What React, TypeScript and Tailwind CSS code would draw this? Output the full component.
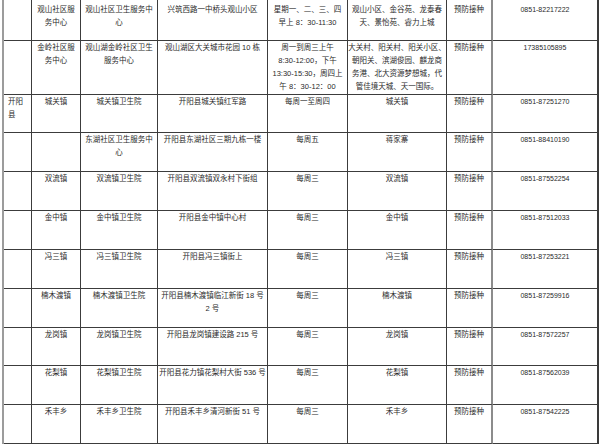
import React from "react";

const br = <br />;

const rows: React.ReactNode[][] = [
  [
    "",
    <>观山社区服{br}务中心</>,
    <>观山社区卫生服务中{br}心</>,
    "兴筑西路一中桥头观山小区",
    <>星期一、二、三、四{br}早上 8：30-11:30</>,
    <>观山小区、金谷苑、龙泰春{br}天、景怡苑、睿力上城</>,
    "预防接种",
    "0851-82217222",
  ],
  [
    "",
    <>金岭社区服{br}务中心</>,
    <>观山湖金岭社区卫生{br}服务中心</>,
    "观山湖区大关城市花园 10 栋",
    <>周一到周三上午{br}8:30-12:00，下午{br}13:30-15:30，周四上{br}午 8：30-12：00</>,
    <>大关村、阳关村、阳关小区、{br}朝阳关、滨湖俊园、麒龙商{br}务港、北大资源梦想城，代{br}管佳境天城、天一国际。</>,
    "预防接种",
    "17385105895",
  ],
  [<>开阳{br}县</>, "城关镇", "城关镇卫生院", "开阳县城关镇红军路", "每周一至周四", "城关镇", "预防接种", "0851-87251270"],
  ["", "", <>东湖社区卫生服务中{br}心</>, "开阳县东湖社区三期九栋一楼", "每周五", "蒋家寨", "预防接种", "0851-88410190"],
  ["", "双流镇", "双流镇卫生院", "开阳县双流镇双永村下街组", "每周三", "双流镇", "预防接种", "0851-87552254"],
  ["", "金中镇", "金中镇卫生院", "开阳县金中镇中心村", "每周三", "金中镇", "预防接种", "0851-87512033"],
  ["", "冯三镇", "冯三镇卫生院", "开阳县冯三镇街上", "每周三", "冯三镇", "预防接种", "0851-87253221"],
  ["", "楠木渡镇", "楠木渡镇卫生院", <>开阳县楠木渡镇临江新街 18 号{br}2 号</>, "每周三", "楠木渡镇", "预防接种", "0851-87259916"],
  ["", "龙岗镇", "龙岗镇卫生院", "开阳县龙岗镇建设路 215 号", "每周三", "龙岗镇", "预防接种", "0851-87572257"],
  ["", "花梨镇", "花梨镇卫生院", "开阳县花力镇花梨村大街 536 号", "每周三", "花梨镇", "预防接种", "0851-87562039"],
  ["", "禾丰乡", "禾丰乡卫生院", "开阳县禾丰乡清河新街 51 号", "每周三", "禾丰乡", "预防接种", "0851-87542225"],
];

const colClass = [
  "text-left pl-[4px] border-r border-[#3c3c3c]",
  "text-center border-r border-[#3c3c3c]",
  "text-center border-r border-[#3c3c3c]",
  "text-center border-r border-[#3c3c3c]",
  "text-center border-r border-[#3c3c3c]",
  "text-center border-r border-[#3c3c3c]",
  "text-center border-r-2 border-r-[#8c8c8c]",
  "text-center border-r-2 border-r-[#3a3a3a]",
];

export default function App() {
  return (
    <div
      className="w-[600px] h-[446px] bg-white overflow-hidden text-[#2a2a2a]"
      style={{ fontFamily: '"Liberation Sans", "Noto Sans CJK SC", sans-serif' }}
    >
      <div className="ml-[2px] w-[597px] border-l-2 border-[#9c9c9c] grid grid-cols-[28px_49px_77px_110px_80px_99px_46px_106px] grid-rows-[41px_54px_38px_39px_39px_39px_39px_39px_38px_39px_39px]">
        {rows.map((r, ri) =>
          r.map((c, ci) => (
            <div
              key={`${ri}-${ci}`}
              className={`${colClass[ci]} border-b border-b-[#3c3c3c] ${ri === 0 ? "pt-[3px]" : "pt-0"} text-[7.5px] leading-[13px] whitespace-nowrap overflow-visible`}
            >
              {ci === 7 ? <span className="text-[7px]">{c}</span> : c}
            </div>
          ))
        )}
      </div>
    </div>
  );
}
